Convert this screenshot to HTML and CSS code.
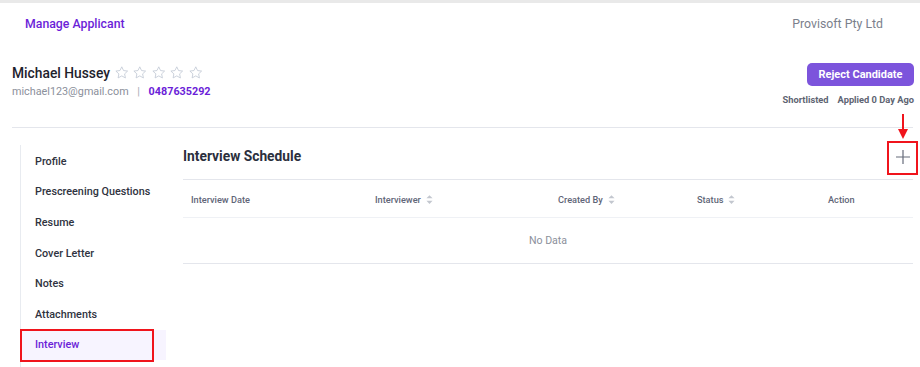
FILE: index.html
```html
<!DOCTYPE html>
<html lang="en">
<head>
  <meta charset="UTF-8">
  <meta name="viewport" content="width=device-width, initial-scale=1.0">
  <title>Manage Applicant</title>
  <link rel="stylesheet" href="styles.css">
</head>
<body>
  <!-- Top bar -->
  <div class="topbar">
    <a class="page-title" href="#">Manage Applicant</a>
    <span class="company">Provisoft Pty Ltd</span>
  </div>

  <!-- Applicant summary -->
  <div class="applicant">
    <div class="applicant-info">
      <div class="name-row">
        <h2 class="name">Michael Hussey</h2>
        <div class="stars">
          <svg class="star" viewBox="0 0 24 24"><path d="M12 1.5l3.2 6.6 7.2.9-5.3 5 1.4 7.2L12 17.6l-6.5 3.6 1.4-7.2-5.3-5 7.2-.9z"/></svg>
          <svg class="star" viewBox="0 0 24 24"><path d="M12 1.5l3.2 6.6 7.2.9-5.3 5 1.4 7.2L12 17.6l-6.5 3.6 1.4-7.2-5.3-5 7.2-.9z"/></svg>
          <svg class="star" viewBox="0 0 24 24"><path d="M12 1.5l3.2 6.6 7.2.9-5.3 5 1.4 7.2L12 17.6l-6.5 3.6 1.4-7.2-5.3-5 7.2-.9z"/></svg>
          <svg class="star" viewBox="0 0 24 24"><path d="M12 1.5l3.2 6.6 7.2.9-5.3 5 1.4 7.2L12 17.6l-6.5 3.6 1.4-7.2-5.3-5 7.2-.9z"/></svg>
          <svg class="star" viewBox="0 0 24 24"><path d="M12 1.5l3.2 6.6 7.2.9-5.3 5 1.4 7.2L12 17.6l-6.5 3.6 1.4-7.2-5.3-5 7.2-.9z"/></svg>
        </div>
      </div>
      <div class="contact">
        <span class="email">michael123@gmail.com</span>
        <span class="sep">|</span>
        <span class="phone">0487635292</span>
      </div>
    </div>
    <div class="applicant-actions">
      <button class="btn-reject">Reject Candidate</button>
      <div class="meta">
        <span>Shortlisted</span>
        <span>Applied 0 Day Ago</span>
      </div>
    </div>
  </div>

  <div class="divider"></div>

  <!-- Main -->
  <div class="main">
    <ul class="side-menu">
      <li class="menu-item">Profile</li>
      <li class="menu-item">Prescreening Questions</li>
      <li class="menu-item">Resume</li>
      <li class="menu-item">Cover Letter</li>
      <li class="menu-item">Notes</li>
      <li class="menu-item">Attachments</li>
      <li class="menu-item active marked">Interview</li>
    </ul>

    <div class="content">
      <div class="section-head">
        <h3>Interview Schedule</h3>
        <button class="btn-add marked">
          <svg class="arrow" viewBox="0 0 12 26"><path d="M6 0v17" /><polygon points="1,15 11,15 6,25" /></svg>
          <svg viewBox="0 0 16 16" width="16" height="16"><path d="M8 1v14M1 8h14"/></svg>
        </button>
      </div>

      <div class="table">
        <div class="thead">
          <div class="th col-date">Interview Date</div>
          <div class="th col-interviewer">Interviewer <svg class="sort" viewBox="0 0 8 12"><polygon points="4,1 7.5,4.5 0.5,4.5"/><polygon points="0.5,7.5 7.5,7.5 4,11"/></svg></div>
          <div class="th col-created">Created By <svg class="sort" viewBox="0 0 8 12"><polygon points="4,1 7.5,4.5 0.5,4.5"/><polygon points="0.5,7.5 7.5,7.5 4,11"/></svg></div>
          <div class="th col-status">Status <svg class="sort" viewBox="0 0 8 12"><polygon points="4,1 7.5,4.5 0.5,4.5"/><polygon points="0.5,7.5 7.5,7.5 4,11"/></svg></div>
          <div class="th col-action">Action</div>
        </div>
        <div class="empty">No Data</div>
      </div>
    </div>
  </div>
</body>
</html>
```

FILE: styles.css
```css
:root {
  --purple: #6b1ed8;
  --purple-btn: #7c54dc;
  --text-dark: #2b2f3c;
  --text-muted: #8b909b;
  --border: #e4e6ec;
  --border-light: #eff1f5;
  --annot: #f0141c;
}

body {
  margin: 0;
  font-family: Roboto, 'Noto Sans', Arial, sans-serif;
  color: var(--text-dark);
  background: #fff;
}

/* Top bar */
.topbar {
  border-top: 3px solid #e9e9e9;
  height: 41px;
  display: flex;
  align-items: center;
  justify-content: space-between;
  padding: 0 37px 0 25px;
}

.page-title {
  color: var(--purple);
  font-size: 12.3px;
  font-weight: 500;
  text-decoration: none;
}

.company {
  color: #7b808c;
  font-size: 12.3px;
}

/* Applicant summary */
.applicant {
  display: flex;
  justify-content: space-between;
  padding: 0 6px 0 12px;
  margin-top: 19px;
}

.name-row {
  display: flex;
  align-items: center;
  height: 20px;
}

.name {
  margin: 0;
  font-size: 13.8px;
  font-weight: 500;
  color: #1e222d;
}

.stars {
  display: flex;
  gap: 5px;
  margin-left: 5px;
}

.star {
  width: 13.5px;
  height: 13.5px;
  fill: none;
  stroke: #c3cad6;
  stroke-width: 1.5;
  stroke-linejoin: round;
}

.contact {
  font-size: 10.8px;
  line-height: 16px;
  margin-top: 1px;
}

.email {
  color: var(--text-muted);
}

.sep {
  color: #a8acb5;
  margin: 0 6px;
}

.phone {
  color: var(--purple);
  font-weight: 700;
}

.applicant-actions {
  display: flex;
  flex-direction: column;
  align-items: flex-end;
}

.btn-reject {
  background: var(--purple-btn);
  color: #fff;
  border: none;
  border-radius: 5px;
  height: 23px;
  width: 107px;
  font-family: inherit;
  font-size: 11px;
  font-weight: 700;
  cursor: pointer;
}

.meta {
  margin-top: 7px;
  display: flex;
  gap: 9px;
  font-size: 9.3px;
  line-height: 14px;
  font-weight: 700;
  color: #5e6472;
}

.divider {
  margin: 20px 7px 0 12px;
  border-top: 1px solid var(--border);
}

/* Main */
.main {
  display: flex;
  padding-left: 20px;
  margin-right: 7px;
}

.side-menu {
  list-style: none;
  margin: 17px 0 0;
  padding: 1px 0 20px;
  width: 145px;
  border-left: 1px solid #e8ebf0;
}

.menu-item {
  height: 30.6px;
  display: flex;
  align-items: center;
  padding-left: 14px;
  font-size: 10.8px;
  font-weight: 500;
  color: #2f3340;
  position: relative;
}

.menu-item.active {
  background: #f7f4ff;
  color: var(--purple);
}

.menu-item.marked::after {
  content: '';
  position: absolute;
  left: -1px;
  top: -1px;
  width: 134px;
  height: 33px;
  border: 2px solid var(--annot);
  box-sizing: border-box;
}

.content {
  flex: 1;
  margin-left: 17px;
}

.section-head {
  display: flex;
  align-items: center;
  justify-content: space-between;
  height: 45px;
  margin-top: 5px;
  padding-bottom: 1px;
}

.section-head h3 {
  margin: 0;
  font-size: 13.8px;
  font-weight: 700;
  color: #2b2f3d;
}

.btn-add {
  width: 20px;
  height: 20px;
  padding: 0;
  border: none;
  background: none;
  display: flex;
  align-items: center;
  justify-content: center;
  position: relative;
  margin-top: 3px;
  cursor: pointer;
}

.btn-add svg {
  stroke: #676c7b;
  stroke-width: 1.2;
}

.btn-add.marked::after {
  content: '';
  position: absolute;
  top: -6px;
  left: -6px;
  right: -5px;
  bottom: -8px;
  border: 2px solid var(--annot);
}

.btn-add .arrow {
  position: absolute;
  width: 12px;
  height: 26px;
  top: -33px;
  left: 4px;
  stroke: var(--annot);
  stroke-width: 2;
  fill: var(--annot);
}

.btn-add .arrow polygon {
  stroke: none;
}

/* Table */
.table {
  border-top: 1px solid var(--border);
}

.thead {
  display: grid;
  grid-template-columns: 184px 183px 139px 131px 1fr;
  height: 37px;
  border-bottom: 1px solid var(--border-light);
}

.th {
  display: flex;
  align-items: center;
  padding: 1px 0 0 8px;
  font-size: 9.2px;
  font-weight: 500;
  color: #5f6678;
}

.sort {
  width: 7px;
  height: 11px;
  margin-left: 5px;
  fill: #c3c7cf;
}

.empty {
  height: 45px;
  display: flex;
  align-items: center;
  justify-content: center;
  font-size: 10.6px;
  color: var(--text-muted);
  border-bottom: 1px solid var(--border);
}
```
